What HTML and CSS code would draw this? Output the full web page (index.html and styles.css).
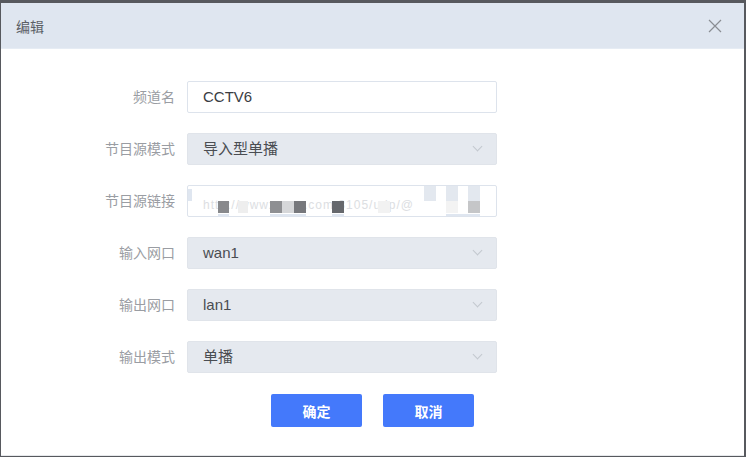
FILE: index.html
```html
<!DOCTYPE html>
<html>
<head>
    <title>编辑</title>
    <link rel="stylesheet" href="styles.css">
</head>
<body>
    <div class="dialog">
        <div class="dialog-header">
            <span class="dialog-title">编辑</span>
            <svg class="close" width="14" height="14" viewBox="0 0 14 14">
                <path d="M1 1L13 13M13 1L1 13" stroke="#8a8d93" stroke-width="1.2" fill="none"/>
            </svg>
        </div>
        <div class="form">
            <label>频道名</label>
            <div class="field">CCTV6</div>

            <label>节目源模式</label>
            <div class="field select">导入型单播<span class="arrow"></span></div>

            <label>节目源链接</label>
            <div class="field link">
                <span class="faint">http://wwwxxxxx.com:8105/udp/@</span>
                <i class="px" style="left:0;top:3px;width:4px;height:12px;background:#dfe6f0"></i>
                <i class="px" style="left:30px;top:15px;width:11px;height:12px;background:#88898c"></i>
                <i class="px" style="left:50px;top:15px;width:10px;height:12px;background:#eeeeee"></i>
                <i class="px" style="left:82px;top:15px;width:12px;height:12px;background:#8e8f92"></i>
                <i class="px" style="left:94px;top:15px;width:12px;height:12px;background:#d6d7d9"></i>
                <i class="px" style="left:106px;top:15px;width:12px;height:12px;background:#77787c"></i>
                <i class="px" style="left:144px;top:15px;width:12px;height:12px;background:#66686c"></i>
                <i class="px" style="left:190px;top:15px;width:12px;height:12px;background:#f2f2f2"></i>
                <i class="px" style="left:236px;top:0;width:12px;height:15px;background:#e3e8ef"></i>
                <i class="px" style="left:258px;top:0;width:12px;height:15px;background:#e3e8ef"></i>
                <i class="px" style="left:280px;top:0;width:12px;height:15px;background:#e3e8ef"></i>
                <i class="px" style="left:258px;top:15px;width:12px;height:12px;background:#f3f3f3"></i>
                <i class="px" style="left:280px;top:15px;width:12px;height:12px;background:#c5c6c8"></i>
                <i class="px" style="left:30px;top:28px;width:11px;height:2px;background:#dfe6f0"></i>
                <i class="px" style="left:82px;top:28px;width:36px;height:2px;background:#dfe6f0"></i>
                <i class="px" style="left:144px;top:28px;width:12px;height:2px;background:#dfe6f0"></i>
                <i class="px" style="left:258px;top:28px;width:34px;height:2px;background:#dfe6f0"></i>
            </div>

            <label>输入网口</label>
            <div class="field select">wan1<span class="arrow"></span></div>

            <label>输出网口</label>
            <div class="field select">lan1<span class="arrow"></span></div>

            <label>输出模式</label>
            <div class="field select">单播<span class="arrow"></span></div>
        </div>
        <div class="buttons">
            <button class="btn">确定</button>
            <button class="btn">取消</button>
        </div>
    </div>
</body>
</html>
```
FILE: styles.css
```css
body {
    margin: 0;
    background-color: #57595e;
    font-family: "Liberation Sans", "Noto Sans CJK SC", sans-serif;
    font-size: 14px;
}
.dialog {
    margin: 3px 2px 0 1px;
    height: 453px;
    background-color: #fff;
    border-bottom: 1px solid #e6e8eb;
    box-sizing: border-box;
}
.dialog-header {
    height: 46px;
    background-color: #dfe6f0;
    border-bottom: 1px solid #e6ecf4;
    box-sizing: border-box;
    display: flex;
    align-items: center;
    justify-content: space-between;
    padding: 0 22px 0 15px;
}
.dialog-title {
    color: #5c5f66;
    font-size: 14px;
}
.close {
    display: block;
}
.form {
    display: grid;
    grid-template-columns: 174px 310px;
    column-gap: 12px;
    row-gap: 20px;
    padding-top: 32px;
}
.form label {
    text-align: right;
    color: #9a9da3;
    line-height: 32px;
}
.field {
    position: relative;
    height: 32px;
    line-height: 30px;
    border: 1px solid #dde3ec;
    border-radius: 2px;
    box-sizing: border-box;
    padding: 0 15px;
    color: #3a3d42;
    font-size: 15px;
}
.select {
    background-color: #e5e9ef;
    border-color: #e0e4ea;
    color: #4a4d52;
}
.arrow {
    position: absolute;
    right: 15px;
    top: 9px;
    width: 6px;
    height: 6px;
    border-right: 1px solid #c3c8cf;
    border-bottom: 1px solid #c3c8cf;
    transform: rotate(45deg);
}
.link {
    overflow: hidden;
}
.faint {
    color: #dcdee2;
    font-size: 12px;
    letter-spacing: 1px;
    position: relative;
    top: 3px;
}
.px {
    position: absolute;
    display: block;
}
.buttons {
    display: flex;
    justify-content: center;
    gap: 21px;
    margin-top: 21px;
}
.btn {
    width: 91px;
    height: 33px;
    border: none;
    border-radius: 2px;
    background-color: #4479fb;
    color: #fff;
    font-family: "Noto Sans CJK SC", sans-serif;
    font-size: 14px;
    font-weight: bold;
    cursor: pointer;
}
```
